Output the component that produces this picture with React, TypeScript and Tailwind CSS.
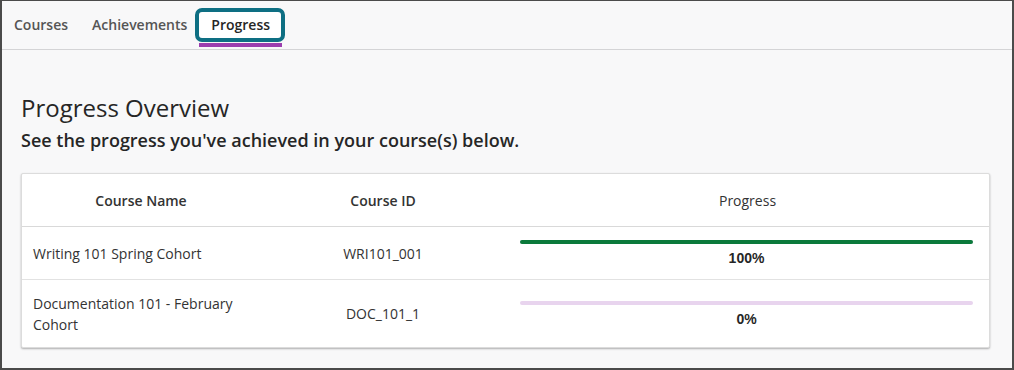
const rows = [
  { name: "Writing 101 Spring Cohort", id: "WRI101_001", pct: 100 },
  { name: "Documentation 101 - February Cohort", id: "DOC_101_1", pct: 0 },
];

function ProgressCell({ pct }: { pct: number }) {
  return (
    <div className="flex flex-col items-stretch pl-[14px] pr-[16px] pt-[2px]">
      <div className="h-[4px] w-full rounded-full bg-[#e8d4ee]">
        <div className="h-[4px] rounded-full bg-[#0b7a3b]" style={{ width: `${pct}%` }} />
      </div>
      <div className="mt-[4px] text-center font-['Liberation_Sans',Arial,sans-serif] text-[14px] font-bold leading-[20px] text-[#262626]">
        {pct}%
      </div>
    </div>
  );
}

export default function App() {
  return (
    <div className="box-border flex h-[370px] w-[1014px] flex-col border-x-2 border-t border-b-2 border-[#4b4b4b] bg-[#f8f8f9] font-['Open_Sans',sans-serif]">
      <nav className="box-border flex h-[49px] shrink-0 items-stretch border-b border-[#d4d4d6] pb-px">
        <div className="flex items-center px-3 text-[14px] font-semibold text-[#555]">Courses</div>
        <div className="flex items-center px-3 text-[14px] font-semibold text-[#555]">Achievements</div>
        <div className="relative flex items-center px-3 text-[14px] font-semibold text-[#262626]">
          <div className="absolute left-[-4px] right-[-3px] top-[7px] h-[34px] rounded-[7px] border-4 border-[#0e6f83] bg-white" />
          <span className="relative">Progress</span>
          <div className="absolute bottom-[1px] left-0 right-0 h-[4px] bg-[#9b3dae]" />
        </div>
      </nav>
      <main className="flex flex-col pl-[19px] pr-[22px] pt-[42px]">
        <h1 className="text-[24px] font-normal leading-[32px] text-[#262626]">Progress Overview</h1>
        <p className="mt-[4px] text-[18px] font-semibold leading-[24px] text-[#262626]">
          See the progress you've achieved in your course(s) below.
        </p>
        <div className="mt-[21px] rounded-[2px] border border-[#dcdcdc] bg-white shadow-[0_1px_2px_rgba(0,0,0,0.3)]">
          <div className="grid h-[53px] grid-cols-[238px_246px_1fr] items-center border-b border-[#d9d9d9] text-[14px] font-semibold text-[#333]">
            <div className="text-center">Course Name</div>
            <div className="text-center">Course ID</div>
            <div className="text-center font-normal">Progress</div>
          </div>
          {rows.map((r, i) => (
            <div
              key={r.id}
              className={`grid grid-cols-[238px_246px_1fr] items-center text-[14px] leading-[21px] text-[#333] ${
                i === 0 ? "h-[53px] border-b border-[#e2e2e2]" : "h-[67px]"
              }`}
            >
              <div className="pl-[11px] pr-[20px]">{r.name}</div>
              <div className="text-center">{r.id}</div>
              <ProgressCell pct={r.pct} />
            </div>
          ))}
        </div>
      </main>
    </div>
  );
}
